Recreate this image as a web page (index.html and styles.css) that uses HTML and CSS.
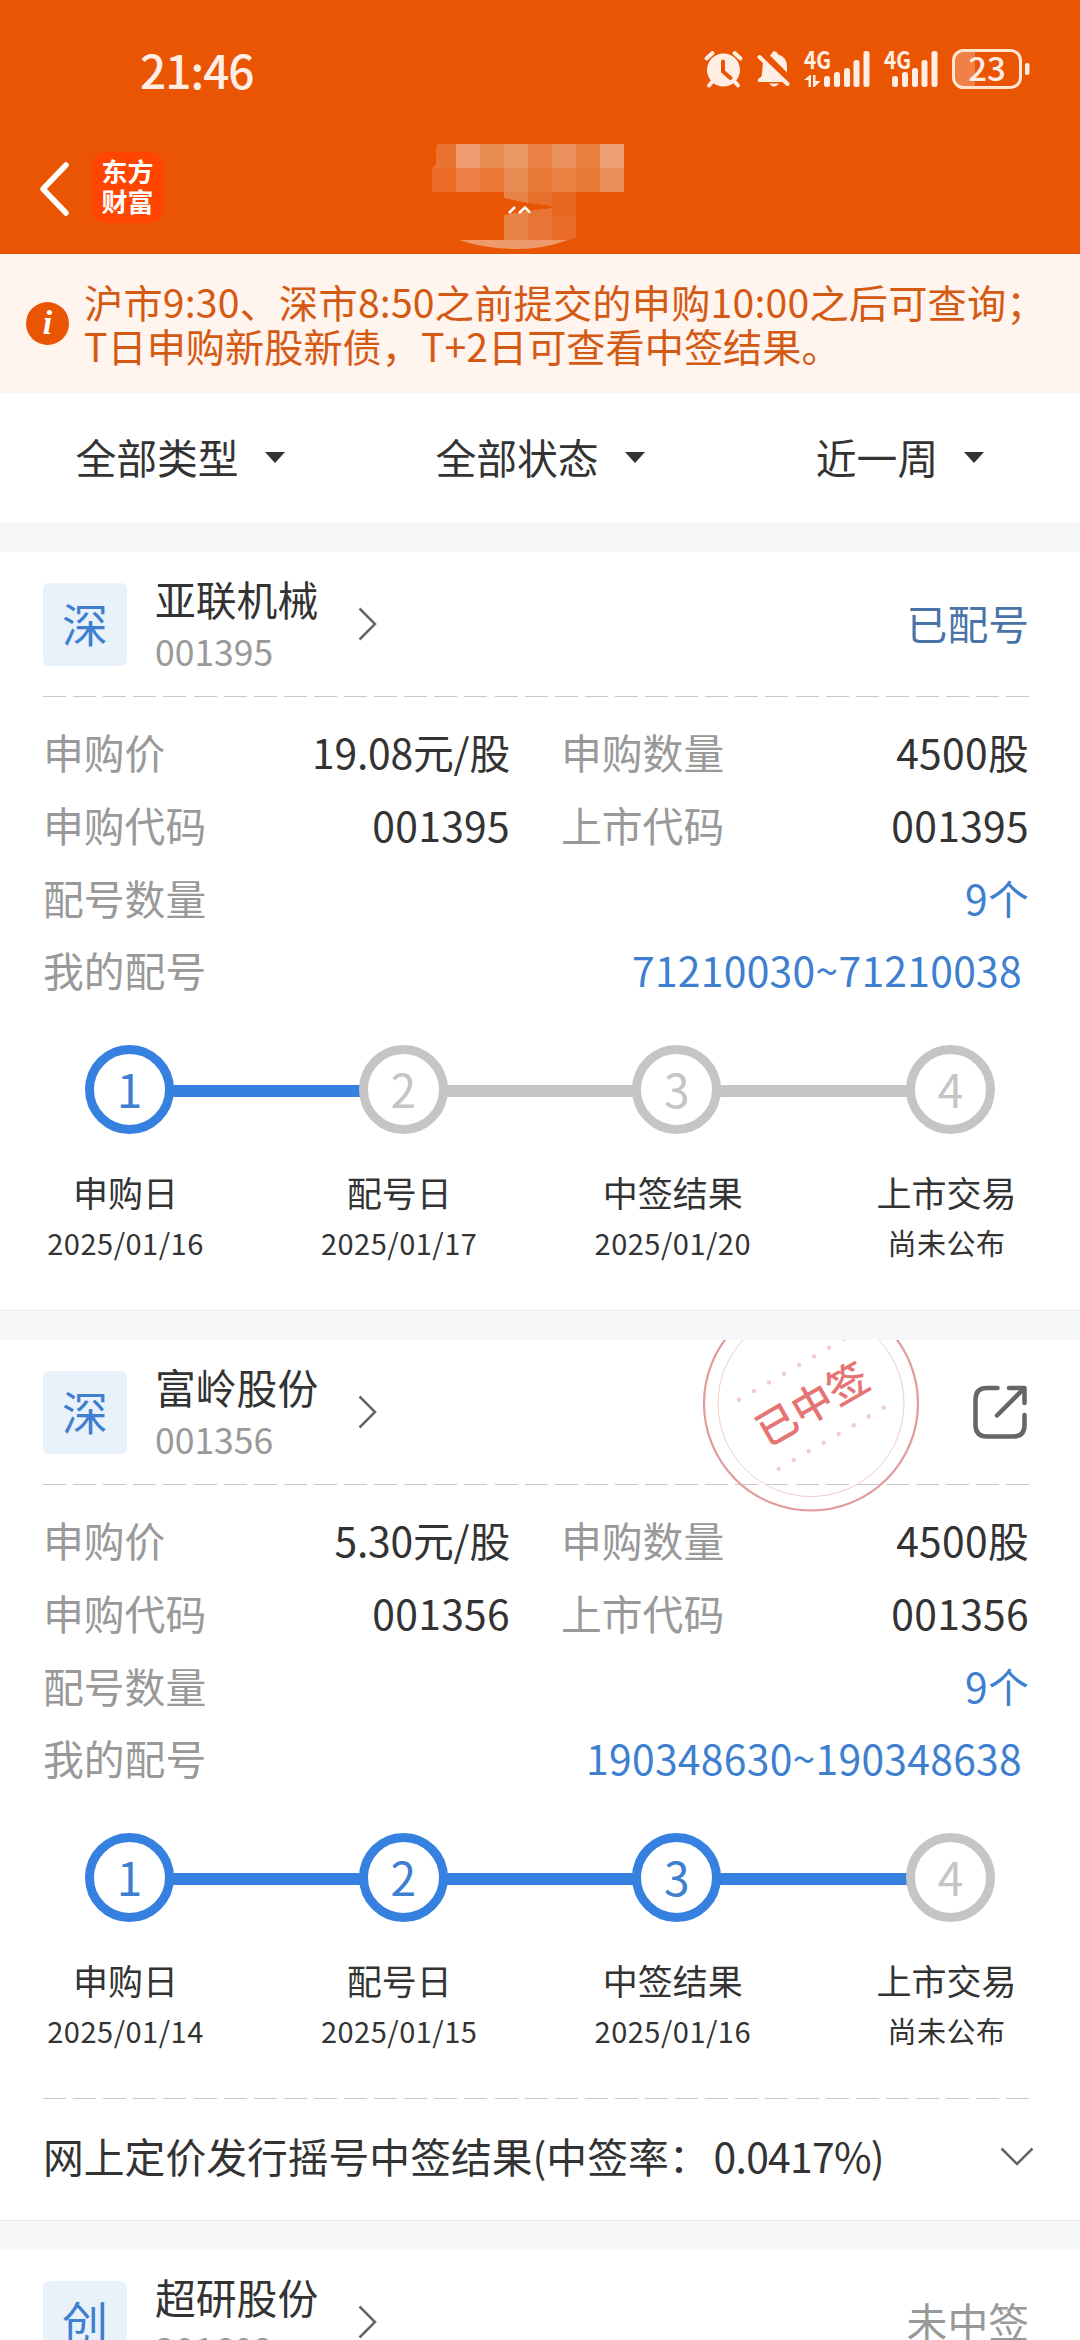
FILE: index.html
```html
<!DOCTYPE html>
<html lang="zh-CN">
<head>
    <meta charset="UTF-8">
    <title>新股申购查询</title>
    <meta name="viewport" content="width=device-width, initial-scale=1.0">
    <link rel="stylesheet" href="styles.css">
</head>
<body>

    <!-- Header -->
    <header>
        <div class="status-bar">
            <span class="time">21:46</span>
            <svg class="status-icons" width="328" height="44" viewBox="702 47 328 44" fill="#ffeee4">
                <!-- alarm -->
                <circle cx="723.5" cy="70" r="16.5"/>
                <path d="M706.500 58.500l6-5.500M740.500 58.500l-6-5.500M712 82l-3 3.500M735 82l3 3.500" stroke="#ffeee4" stroke-width="4" stroke-linecap="round"/>
                <path d="M723 61.500v10l7.500 6.500" fill="none" stroke="#ea5504" stroke-width="4" stroke-linecap="round" stroke-linejoin="round"/>
                <!-- muted bell -->
                <path d="M770 55.500q1.500-1 2.500-3.500q2-1.500 4 0q1 1.500 2 2.500q8 3 8.500 11v7z"/>
                <path d="M763 62l20 20h-24.500q-1.500-1.500 0-3.500q3.500-1 3.500-5z"/>
                <path d="M759.500 57l28 27" stroke="#ffeee4" stroke-width="4" stroke-linecap="round"/>
                <path d="M769 83.500h10q-5 6-10 0z"/>
                <!-- signal 1 -->
                <text x="804" y="69" class="net" textLength="27" lengthAdjust="spacingAndGlyphs">4G</text>
                <path d="M804 80l6-5h1v12h-2.500v-7zM813 75h2.500v6h5l-6 6h-1.500z"/>
                <rect x="824" y="76" width="6" height="11" rx="2.500"/>
                <rect x="834" y="72" width="6" height="15" rx="2.500"/>
                <rect x="844" y="68" width="6" height="19" rx="2.500"/>
                <rect x="853.500" y="60" width="6" height="27" rx="2.500"/>
                <rect x="863.500" y="51" width="6" height="36" rx="2.500"/>
                <!-- signal 2 -->
                <text x="884" y="69" class="net" textLength="27" lengthAdjust="spacingAndGlyphs">4G</text>
                <rect x="892" y="76" width="6" height="11" rx="2.500"/>
                <rect x="902" y="72" width="6" height="15" rx="2.500"/>
                <rect x="912" y="68" width="6" height="19" rx="2.500"/>
                <rect x="921.500" y="60" width="6" height="27" rx="2.500"/>
                <rect x="931.500" y="51" width="6" height="36" rx="2.500"/>
                <!-- battery -->
                <path d="M975 51v36h-12q-9 0-9-9v-18q0-9 9-9z" fill="#f08146"/>
                <rect x="953.500" y="50.500" width="67" height="37" rx="10" fill="none" stroke="#ffe6d2" stroke-width="3"/>
                <rect x="1025" y="63" width="4.500" height="12" rx="2"/>
                <text x="987" y="81" class="level" text-anchor="middle">23</text>
            </svg>
        </div>
        <div class="title-bar">
            <svg class="back" width="33" height="56" viewBox="0 0 33 56">
                <path d="M28 4L5 28l23 24" fill="none" stroke="#fff" stroke-width="5.500" stroke-linecap="round" stroke-linejoin="round"/>
            </svg>
            <div class="logo">东方<br>财富</div>
            <!-- masked account name -->
            <svg class="mask" width="192" height="106" viewBox="432 144 192 106" shape-rendering="crispEdges">
                <path d="M437 144h19v24h-24q5-3 4-10q-1-8 1-14z" fill="#eb7332"/>
                <rect x="456" y="144" width="24" height="24" fill="#ef9c70"/>
                <rect x="480" y="144" width="24" height="24" fill="#e98c52"/>
                <rect x="504" y="144" width="24" height="24" fill="#e99866"/>
                <rect x="528" y="144" width="24" height="24" fill="#ec8148"/>
                <rect x="552" y="144" width="24" height="24" fill="#eb925e"/>
                <rect x="576" y="144" width="24" height="24" fill="#e78040"/>
                <rect x="600" y="144" width="24" height="24" fill="#eda075"/>
                <rect x="432" y="168" width="24" height="24" fill="#eb6b27"/>
                <rect x="456" y="168" width="24" height="24" fill="#ee8148"/>
                <rect x="480" y="168" width="24" height="24" fill="#e97935"/>
                <rect x="504" y="168" width="24" height="24" fill="#e98d54"/>
                <rect x="528" y="168" width="24" height="24" fill="#e97937"/>
                <rect x="552" y="168" width="24" height="24" fill="#eb8043"/>
                <rect x="576" y="168" width="24" height="24" fill="#e87a38"/>
                <rect x="600" y="168" width="24" height="24" fill="#ec8e57"/>
                <path d="M504 192h24v11l-24-5z" fill="#e98348"/>
                <path d="M528 192h24v14l-24-3z" fill="#e8702c"/>
                <path d="M552 192h24v24h-24z" fill="#e96620"/>
                <path d="M504 215l24-4v29h-24z" fill="#e98348"/>
                <path d="M528 211l24-3v32h-24z" fill="#e77535"/>
                <path d="M552 216h24v22l-8 2h-16z" fill="#e96d28"/>
                <path d="M459 240h109q-24 9-50 9q-32 0-59-9z" fill="#ef9a6c" shape-rendering="auto"/>
                <path d="M509 213l6-6M519 213l6-5.500l5 5" fill="none" stroke="#fff" stroke-width="2.500" shape-rendering="auto"/>
            </svg>
        </div>
    </header>

    <!-- Notice -->
    <div class="notice">
        <span class="info-icon">i</span>
        <p><span class="first">沪市9:30、深市8:50之前提交的申购10:00之后可查询；</span><br>T日申购新股新债，T+2日可查看中签结果。</p>
    </div>

    <!-- Filters -->
    <nav class="filters">
        <a>全部类型<i class="caret"></i></a>
        <a>全部状态<i class="caret"></i></a>
        <a>近一周<i class="caret"></i></a>
    </nav>

    <main>

        <section class="card">
            <div class="card-head">
                <span class="market">深</span>
                <div class="stock">
                    <div class="name">亚联机械</div>
                    <div class="code">001395</div>
                </div>
                <svg class="arrow" width="20" height="36" viewBox="0 0 20 36"><path d="M1.500 2.500L17 18L1.500 33.500"/></svg>
                <span class="state blue">已配号</span>
            </div>
            <div class="dashed"></div>
            <div class="info">
                <div class="row">
                    <label>申购价</label><span class="value price">19.08元/股</span>
                    <label class="second">申购数量</label><span class="value">4500股</span>
                </div>
                <div class="row">
                    <label>申购代码</label><span class="value">001395</span>
                    <label class="second">上市代码</label><span class="value">001395</span>
                </div>
                <div class="row wide"><label>配号数量</label><span class="value link">9个</span></div>
                <div class="row wide"><label>我的配号</label><span class="value link range">71210030~71210038</span></div>
            </div>
            <div class="track">
                <b class="dot done">1</b><i class="line done"></i>
                <b class="dot">2</b><i class="line"></i>
                <b class="dot">3</b><i class="line"></i>
                <b class="dot">4</b>
            </div>
            <div class="steps">
                <div class="step">申购日<small>2025/01/16</small></div>
                <div class="step">配号日<small>2025/01/17</small></div>
                <div class="step">中签结果<small>2025/01/20</small></div>
                <div class="step">上市交易<small>尚未公布</small></div>
            </div>
        </section>

        <section class="card">
            <!-- "won" stamp, cut off by the card's top edge -->
            <svg class="stamp" width="220" height="173" viewBox="701 1340 220 173">
                <circle cx="811" cy="1403.500" r="107" fill="none" stroke="#e39a9a" stroke-width="2.200"/>
                <circle cx="811" cy="1403.500" r="93" fill="none" stroke="#f3cccc" stroke-width="1"/>
                <path d="M739 1399.700L852 1334.500M778.700 1468.700L884 1407.600" fill="none" stroke="#f0cccc" stroke-width="4.400" stroke-linecap="round" stroke-dasharray="0 17.330"/>
                <text x="812" y="1419" text-anchor="middle" transform="rotate(-30 812 1403.500)">已中签</text>
            </svg>
            <div class="card-head">
                <span class="market">深</span>
                <div class="stock">
                    <div class="name">富岭股份</div>
                    <div class="code">001356</div>
                </div>
                <svg class="arrow" width="20" height="36" viewBox="0 0 20 36"><path d="M1.500 2.500L17 18L1.500 33.500"/></svg>
                <svg class="share" width="56" height="56" viewBox="0 0 56 56">
                    <path d="M25.500 4H15Q3.500 4 3.500 15.500V41Q3.500 52.500 15 52.500H41Q52.500 52.500 52.500 41V31M37 4H52.500V19M51.500 5L25 31.500"/>
                </svg>
            </div>
            <div class="dashed"></div>
            <div class="info">
                <div class="row">
                    <label>申购价</label><span class="value price">5.30元/股</span>
                    <label class="second">申购数量</label><span class="value">4500股</span>
                </div>
                <div class="row">
                    <label>申购代码</label><span class="value">001356</span>
                    <label class="second">上市代码</label><span class="value">001356</span>
                </div>
                <div class="row wide"><label>配号数量</label><span class="value link">9个</span></div>
                <div class="row wide"><label>我的配号</label><span class="value link range">190348630~190348638</span></div>
            </div>
            <div class="track">
                <b class="dot done">1</b><i class="line done"></i>
                <b class="dot done">2</b><i class="line done"></i>
                <b class="dot done">3</b><i class="line done"></i>
                <b class="dot">4</b>
            </div>
            <div class="steps">
                <div class="step">申购日<small>2025/01/14</small></div>
                <div class="step">配号日<small>2025/01/15</small></div>
                <div class="step">中签结果<small>2025/01/16</small></div>
                <div class="step">上市交易<small>尚未公布</small></div>
            </div>
            <div class="dashed"></div>
            <div class="result">
                <span>网上定价发行摇号中签结果(中签率：<span class="rate">0.0417%)</span></span>
                <svg width="36" height="20" viewBox="0 0 36 20"><path d="M2.500 1.500L18 17L33.500 1.500"/></svg>
            </div>
        </section>

        <section class="card">
            <div class="card-head">
                <span class="market">创</span>
                <div class="stock">
                    <div class="name">超研股份</div>
                    <div class="code">301602</div>
                </div>
                <svg class="arrow" width="20" height="36" viewBox="0 0 20 36"><path d="M1.500 2.500L17 18L1.500 33.500"/></svg>
                <span class="state grey">未中签</span>
            </div>
        </section>

    </main>

</body>
</html>
```
FILE: styles.css
```css
* {
    box-sizing: border-box;
}
body {
    margin: 0;
    width: 1080px;
    height: 2340px;
    overflow: hidden;
    background-color: #f6f7f9;
    color: #333;
    font-family: "Noto Sans CJK SC", sans-serif;
    font-size: 40.8px;
}

/* Header */
header {
    height: 254px;
    background-color: #ea5504;
}
.status-bar {
    display: flex;
    justify-content: space-between;
    align-items: center;
    height: 138px;
    padding: 0 50px 0 140px;
}
.time {
    color: #ffeee4;
    font-size: 46px;
    font-weight: 500;
    letter-spacing: -1px;
    line-height: 60px;
}
.net {
    font-size: 24px;
    font-weight: 700;
}
.level {
    font-size: 33px;
    font-weight: 500;
}
.title-bar {
    display: flex;
    align-items: flex-start;
    height: 116px;
    padding-left: 38px;
}
.back {
    margin-top: 23px;
}
.logo {
    width: 71px;
    height: 71px;
    margin: 14px 0 0 21px;
    padding-top: 4px;
    border-radius: 14px;
    background-color: #ff4500;
    color: #fff;
    font-size: 26px;
    font-weight: 700;
    line-height: 30px;
    text-align: center;
}
.mask {
    margin: 6px 0 0 269px;
}

/* Notice */
.notice {
    display: flex;
    align-items: center;
    height: 139px;
    padding-left: 26px;
    background-color: #fff4ee;
    color: #d45a14;
}
.notice p {
    margin: 0 0 2px 15px;
    font-size: 39.2px;
    line-height: 44px;
    white-space: nowrap;
}
.notice .first {
    letter-spacing: 0.2px;
}
.info-icon {
    width: 43px;
    height: 43px;
    border-radius: 50%;
    background-color: #ea5504;
    color: #fff;
    font: italic bold 34px/41px "Liberation Serif", serif;
    text-align: center;
}

/* Filters */
.filters {
    display: flex;
    height: 130px;
    margin-bottom: 29px;
    background-color: #fff;
}
.filters a {
    display: flex;
    flex: 1;
    justify-content: center;
    align-items: center;
    padding-bottom: 3px;
}
.caret {
    margin: 2px 0 0 26px;
    border: 10px solid transparent;
    border-top: 11px solid #333;
    border-bottom: 0;
}

/* Cards */
.card {
    position: relative;
    margin-bottom: 29px;
    padding: 0 51px 0 43px;
    border-bottom: 1px solid #ebecee;
    background-color: #fff;
}
.card-head {
    display: flex;
    align-items: center;
    height: 144px;
}
.market {
    width: 84px;
    height: 83px;
    border-radius: 6px;
    background-color: #e9f2fb;
    color: #3f7fcf;
    font-size: 46px;
    line-height: 79px;
    text-align: center;
}
.stock {
    width: 203px;
    margin: 2px 0 0 28px;
    line-height: 52px;
}
.code {
    color: #999;
    font-size: 35.5px;
}
.arrow, .share, .result svg {
    fill: none;
    stroke: #666;
    stroke-width: 2.5;
}
.share {
    margin-left: auto;
    margin-right: 1px;
    stroke-width: 4.5;
    stroke-linecap: round;
    stroke-linejoin: round;
}
.state {
    margin-left: auto;
    padding-bottom: 3px;
}
.blue {
    color: #4a74a8;
}
.grey {
    color: #999;
}
.stamp {
    position: absolute;
    top: 0;
    left: 701px;
}
.stamp text {
    fill: #e67474;
    font-size: 40.8px;
    font-weight: 500;
}
.dashed {
    height: 1px;
    background: repeating-linear-gradient(90deg, #c8c8c8 0 23px, transparent 23px 30.1px);
}

.info {
    padding-top: 19px;
}
.row {
    display: grid;
    grid-template-columns: 170px 297px 215px 304px;
    line-height: 72.75px;
    white-space: nowrap;
}
.row.wide {
    grid-template-columns: 170px 1fr;
}
.row label {
    color: #999;
}
.row .second {
    padding-left: 51px;
}
.value {
    letter-spacing: 0.3px;
    text-align: right;
}
.price {
    letter-spacing: -0.2px;
}
.link {
    color: #3f7fcf;
}
.range {
    padding-right: 7px;
}

/* Progress */
.track {
    display: flex;
    align-items: center;
    margin-top: 38px;
    padding: 0 34px 0 42px;
}
.dot {
    width: 89px;
    height: 89px;
    border: 9px solid #c5c5c5;
    border-radius: 50%;
    color: #c5c5c5;
    font-size: 46px;
    font-weight: 400;
    line-height: 68px;
    text-align: center;
}
.line {
    flex: 1;
    height: 12px;
    margin: 3px -1px 0;
    background-color: #c5c5c5;
}
.dot.done {
    border-color: #3680e0;
    color: #3f7fcf;
}
.line.done {
    background-color: #3680e0;
}
.steps {
    display: flex;
    justify-content: space-between;
    padding: 33px 0 43px;
}
.step {
    width: 165px;
    font-size: 35px;
    line-height: 50px;
    text-align: center;
}
.step small {
    display: block;
    font-size: 29px;
    letter-spacing: 0.5px;
}

.result {
    display: flex;
    justify-content: space-between;
    align-items: center;
    height: 121px;
    margin-right: -6px;
    padding-bottom: 9px;
}
.rate {
    margin-left: 4px;
    letter-spacing: -0.7px;
}
.result svg {
    margin-top: 4px;
}
```
